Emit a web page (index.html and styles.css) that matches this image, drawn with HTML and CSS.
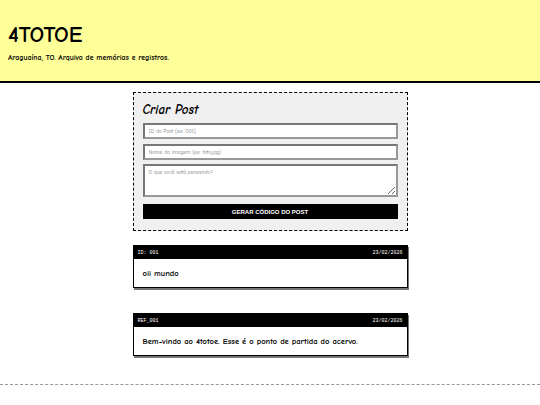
FILE: index.html
```html
<!DOCTYPE html>
<html lang="pt-BR">
<head>
<meta charset="utf-8">
<title>4TOTOE</title>
<link rel="stylesheet" href="styles.css">
</head>
<body>
<header class="site-header">
  <h1 class="site-title">4TOTOE</h1>
  <p class="site-sub">Araguaína, TO. Arquivo de memórias e registros.</p>
</header>
<main class="main">
  <section class="composer">
    <h2 class="composer-title">Criar Post</h2>
    <input class="field" type="text" placeholder="ID do Post (ex: 001)">
    <input class="field" type="text" placeholder="Nome da imagem (ex: foto.jpg)">
    <textarea class="field area" placeholder="O que você está pensando?"></textarea>
    <button class="btn" type="button">GERAR CÓDIGO DO POST</button>
  </section>
  <article class="post">
    <div class="post-head"><span>ID: 001</span><span>23/02/2026</span></div>
    <div class="post-body">oii mundo</div>
  </article>
  <article class="post">
    <div class="post-head"><span>REF_001</span><span>23/02/2026</span></div>
    <div class="post-body">Bem-vindo ao 4totoe. Esse é o ponto de partida do acervo.</div>
  </article>
</main>
<footer class="site-footer"></footer>
</body>
</html>
```
FILE: styles.css
```css
* { box-sizing: border-box; }
html, body { margin: 0; padding: 0; }
body {
  background: #fff;
  color: #000;
  font-family: "Comic Sans MS", "Comic Neue", "Chalkboard SE", cursive, sans-serif;
}
.site-header {
  background: #ffff99;
  border-bottom: 2px solid #000;
  height: 83px;
  padding: 21px 8px 0;
}
.site-title {
  margin: 0;
  font-size: 23px;
  line-height: 28px;
  font-weight: bold;
}
.site-sub {
  margin: 4px 0 0;
  font-size: 7.8px;
  font-weight: bold;
}
.main {
  width: 275px;
  margin: 9px auto 0;
  display: flex;
  flex-direction: column;
}
.composer {
  background: #f0f0f0;
  border: 1px dashed #000;
  padding: 8px 9px 11px;
  display: flex;
  flex-direction: column;
}
.composer-title {
  margin: 0 0 4px;
  font-size: 13px;
  line-height: 18px;
  font-weight: bold;
  font-style: italic;
}
.field {
  display: block;
  width: 100%;
  height: 16px;
  margin-top: 5px;
  border: 2px solid #777;
  border-right-color: #999;
  border-bottom-color: #999;
  background: #fff;
  font-family: inherit;
  font-size: 5.5px;
  padding: 0 4px;
  color: #000;
}
.composer-title + .field { margin-top: 0; }
.field::placeholder { color: #777; }
.area {
  height: 33px;
  margin-top: 4px;
  padding: 3px 4px;
  resize: vertical;
}
.btn {
  margin-top: 7px;
  height: 15px;
  background: #000;
  color: #fff;
  border: none;
  font-family: "Liberation Sans", Arial, sans-serif;
  font-weight: bold;
  font-size: 6px;
}
.post {
  margin-top: 14px;
  border: 1px solid #000;
  box-shadow: 1px 2px 0 #777;
}
.post + .post { margin-top: 25px; }
.post-head {
  background: #000;
  color: #fff;
  display: flex;
  justify-content: space-between;
  padding: 0 4px;
  height: 13px;
  align-items: center;
  font-family: "Liberation Mono", "DejaVu Sans Mono", monospace;
  font-size: 5px;
}
.post-body {
  padding: 8px 9px 8px;
  font-size: 8.5px;
  line-height: 12px;
  font-weight: bold;
}
.site-footer {
  margin-top: 28px;
  border-top: 1px dashed #999;
}
```
